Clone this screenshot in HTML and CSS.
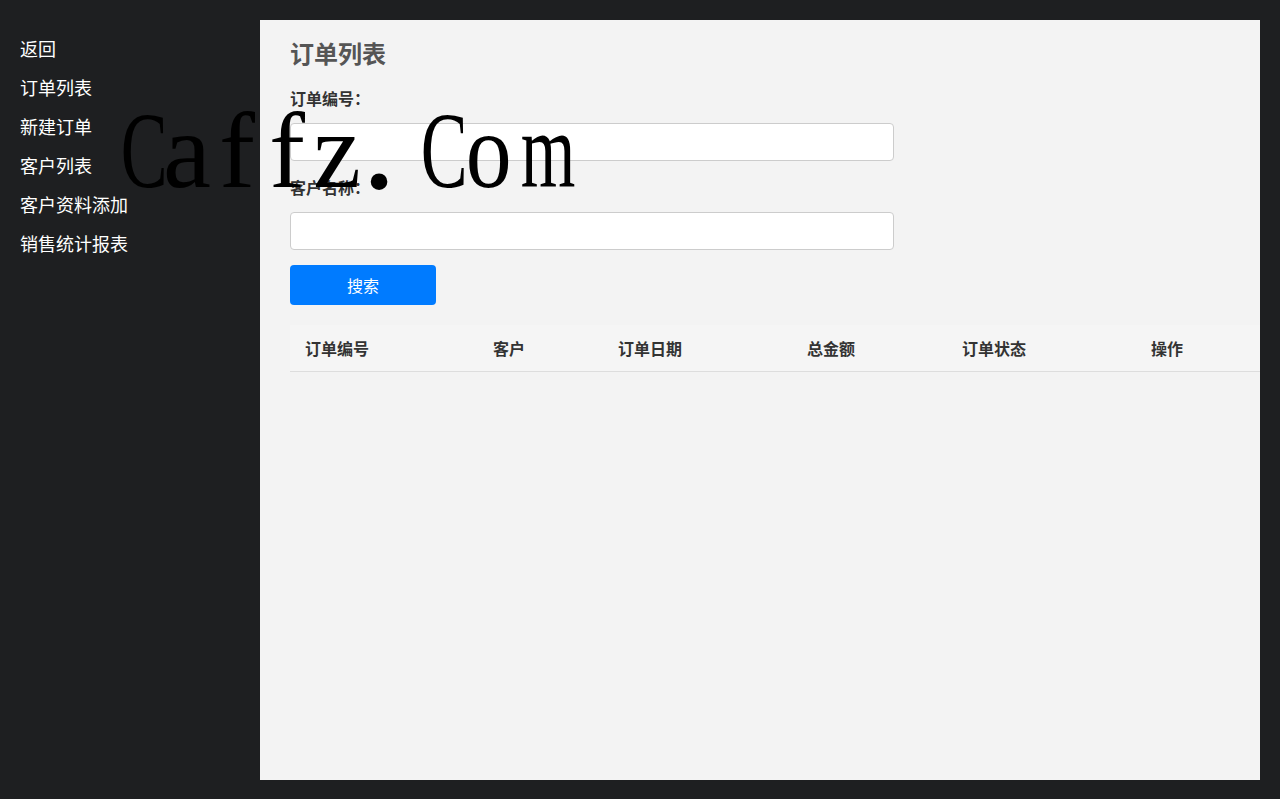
FILE: index.html
```html
<!DOCTYPE html>
<html>
    <head>
        <meta charset="utf-8">
        <title>订单列表</title>
        <link rel="stylesheet" href="styles.css">
    </head>
    <body>
        <div class="layout">
            <ul class="menu">
                <li><a href="#">返回</a></li>
                <li><a href="#">订单列表</a></li>
                <li><a href="#">新建订单</a></li>
                <li><a href="#">客户列表</a></li>
                <li><a href="#">客户资料添加</a></li>
                <li><a href="#">销售统计报表</a></li>
            </ul>
            <div class="main">
                <h2 class="titulo">订单列表</h2>
                <form class="busca">
                    <label class="rotulo">订单编号：</label>
                    <input type="text" class="campo">
                    <label class="rotulo">客户名称：</label>
                    <input type="text" class="campo">
                    <button type="button" class="botao">搜索</button>
                </form>
                <table class="pedidos" cellspacing="0">
                    <thead>
                        <tr>
                            <th class="c1">订单编号</th>
                            <th class="c2">客户</th>
                            <th class="c3">订单日期</th>
                            <th class="c4">总金额</th>
                            <th class="c5">订单状态</th>
                            <th>操作</th>
                        </tr>
                    </thead>
                    <tbody></tbody>
                </table>
            </div>
        </div>
        <div class="marca"><span class="larga">C</span><span>a</span><span>f</span><span>f</span><span>z</span><span class="ponto">.</span><span class="larga">C</span><span class="media">o</span><span class="larga">m</span></div>
    </body>
</html>
```

FILE: styles.css
```css
*{
    box-sizing: border-box;
}
body{
    margin: 0;
    background-color: #1e1f21;
    font-family: "Noto Sans CJK SC", "Noto Sans", sans-serif;
}
.layout{
    display: flex;
    height: 799px;
}
.menu{
    width: 260px;
    flex-shrink: 0;
    list-style: none;
    margin: 0;
    padding: 29px 0 0 20px;
}
.menu li{
    line-height: 39px;
    font-size: 18px;
}
.menu a{
    color: #fff;
    text-decoration: none;
}
.main{
    width: 1000px;
    height: 760px;
    margin-top: 20px;
    background-color: #f3f3f3;
    padding: 15px 0 0 30px;
}
.titulo{
    margin: 0;
    font-size: 24px;
    line-height: 36px;
    font-weight: bold;
    color: #555;
}
.busca{
    display: flex;
    flex-direction: column;
    align-items: flex-start;
    margin-top: 15px;
}
.rotulo{
    font-size: 16px;
    line-height: 24px;
    font-weight: 600;
    color: #333;
    margin-bottom: 13px;
}
.campo{
    width: 604px;
    height: 38px;
    border: 1px solid #ccc;
    border-radius: 4px;
    background: #fff;
    margin: 0 0 14px 0;
    padding: 0 8px;
}
.botao{
    width: 146px;
    height: 40px;
    margin-top: 1px;
    border: none;
    border-radius: 4px;
    background-color: #007bff;
    color: #fff;
    font-family: inherit;
    font-size: 16px;
}
.pedidos{
    width: 970px;
    margin-top: 20px;
    border-collapse: collapse;
}
.pedidos th{
    background-color: #f5f5f5;
    height: 46px;
    padding: 0 0 0 15px;
    text-align: left;
    font-size: 16px;
    font-weight: bold;
    color: #333;
    border-bottom: 1px solid #ddd;
}
.c1{ width: 188px; }
.c2{ width: 125px; }
.c3{ width: 189px; }
.c4{ width: 155px; }
.c5{ width: 189px; }
/* marca d'agua por cima da pagina */
.marca{
    position: absolute;
    left: 112px;
    top: 97px;
    display: flex;
    font-family: "Liberation Serif", serif;
    font-size: 108px;
    line-height: 108px;
    color: #000;
    pointer-events: none;
}
.marca span{
    display: inline-block;
    width: 50px;
    text-align: center;
}
.marca .larga{
    transform: scaleX(0.65);
}
.marca .media{
    transform: scaleX(0.85);
}
.marca .ponto{
    transform: translateX(-8px) scale(1.3, 1.3);
    transform-origin: 50% 80%;
}
```
